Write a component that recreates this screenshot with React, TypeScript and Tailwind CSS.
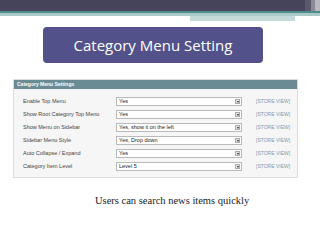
import React from "react";

const rows: [string, string][] = [
  ["Enable Top Menu", "Yes"],
  ["Show Root Category Top Menu", "Yes"],
  ["Show Menu on Sidebar", "Yes, show it on the left"],
  ["Sidebar Menu Style", "Yes, Drop down"],
  ["Auto Collapse / Expand", "Yes"],
  ["Category Item Level", "Level 5"],
];

export default function App() {
  return (
    <div className="w-[320px] h-[240px] bg-white overflow-hidden relative" style={{ fontFamily: "'Liberation Sans', Arial, sans-serif" }}>
      {/* top band */}
      <div className="flex h-[11px]">
        <div className="flex-1 bg-[#45445a]" />
        <div className="w-[6px] bg-[#5a5a6c]" />
        <div className="w-[4px] bg-[#8a8a98]" />
        <div className="w-[5px] bg-[#b8b8c0]" />
      </div>
      <div className="h-[2px] bg-[#4b8d8a]" />
      <div className="h-[3px] bg-[#a9c9c8]" />
      <div className="flex">
        <div className="w-[190px]" />
        <div className="w-[105px] h-[5px] bg-[#c6d9da]" />
      </div>
      {/* title box */}
      <div className="flex justify-center mt-[6px]">
        <div className="ml-[-14px] w-[220px] h-[36px] rounded-[4px] bg-[#53518a] flex items-center justify-center text-white text-[15px]" style={{ fontFamily: "'Open Sans', sans-serif" }}>
          Category Menu Setting
        </div>
      </div>
      {/* panel */}
      <div className="ml-[13px] mt-[16px] w-[285px] h-[99px] bg-[#f6f6f6] border border-[#dcdcdc]">
        <div className="h-[9px] bg-[#6b8b94] text-white text-[5px] font-bold leading-[9px] pl-[3px]">Category Menu Settings</div>
        <div className="flex flex-col pt-[8px] gap-[4px]">
          {rows.map(([l, v]) => (
            <div key={l} className="flex items-center h-[9px] text-[5.5px] text-[#444]">
              <div className="w-[102px] pl-[9px]">{l}</div>
              <div className="w-[126px] h-[9px] bg-white border border-[#b9b9b9] flex items-center justify-between pl-[2px] pr-[1px]">
                <span className="text-[#222]">{v}</span>
                <span className="w-[5px] h-[5px] bg-[#e6e6e6] border border-[#aaa] flex items-center justify-center">
                  <span className="w-0 h-0 border-l-[1.5px] border-r-[1.5px] border-t-[2px] border-l-transparent border-r-transparent border-t-[#222]" />
                </span>
              </div>
              <div className="ml-[14px] text-[#8a96a6] text-[5px]">[STORE VIEW]</div>
            </div>
          ))}
        </div>
      </div>
      <div className="mt-[15px] ml-[95px] text-[10.5px] text-[#222]" style={{ fontFamily: "'Liberation Serif', serif" }}>
        Users can search news items quickly
      </div>
    </div>
  );
}
